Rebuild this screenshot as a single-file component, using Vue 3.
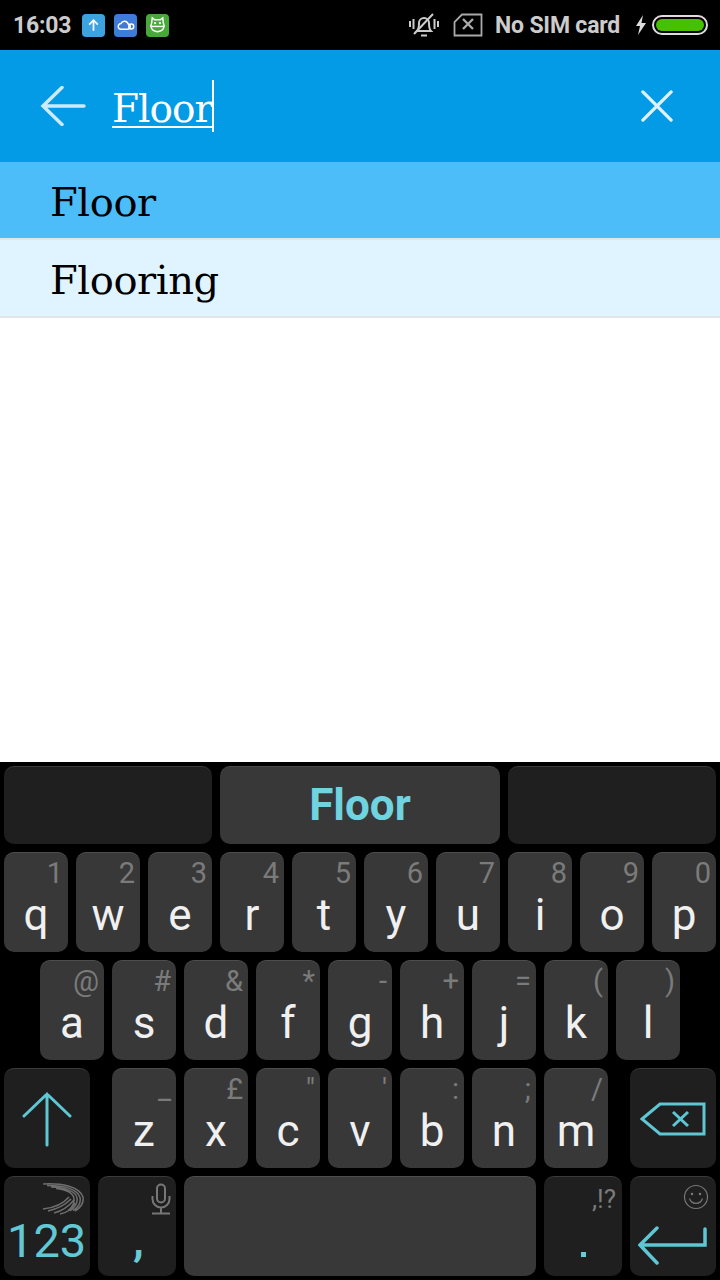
<template>
  <div class="phone">
    <div class="status">
      <span class="time">16:03</span>
      <span class="note blue">
        <svg width="24" height="24" viewBox="0 0 24 24" fill="none" stroke="#fff" stroke-width="1.8"><path d="M12 18V7M7.500 11.500 12 7l4.500 4.500"/></svg>
      </span>
      <span class="note cloud">
        <svg width="24" height="24" viewBox="0 0 24 24" fill="none" stroke="#fff" stroke-width="1.500"><path d="M7.500 16.500h7a2.800 2.800 0 0 0 .3-5.500A4 4 0 0 0 7.300 10.500 3 3 0 0 0 7.500 16.500z"/><circle cx="18" cy="13.500" r="2.600"/></svg>
      </span>
      <span class="note green">
        <svg width="24" height="24" viewBox="0 0 24 24" fill="none" stroke="#fff" stroke-width="1.500"><path d="M6.500 4.500 9 6.500h6l2.500-2 .5 5c2 4 .5 9-6 9.500-6.500-.5-8-5.500-6-9.500z"/><path d="M5.500 13.500h13"/><circle cx="9.500" cy="10" r=".5"/><circle cx="14.500" cy="10" r=".5"/></svg>
      </span>
      <span class="spacer"></span>
      <svg class="bell" width="32" height="26" viewBox="0 0 32 26" fill="none" stroke="#ccc" stroke-width="2">
        <path d="M9 19c2-2 2-5 2-8a5 5 0 0 1 10 0c0 3 0 6 2 8z"/>
        <path d="M13 23.500h6M6 22 25 2" />
        <path d="M2 9v6M5.500 7v10M26.500 7v10M30 9v6"/>
      </svg>
      <svg class="sim" width="30" height="24" viewBox="0 0 30 24" fill="none" stroke="#aaa" stroke-width="1.800">
        <path d="M9 1.500h19.500v21H1.500V9z"/>
        <path d="M10 6l10 10M20 6 10 16" stroke-width="2.400"/>
      </svg>
      <span class="carrier">No SIM card</span>
      <svg class="bolt" width="12" height="20" viewBox="0 0 12 20"><path d="M8 0 1 11h4l-2 9 8-12H6.500z" fill="#ddd"/></svg>
      <span class="battery"><span class="charge"></span></span>
    </div>

    <div class="search">
      <svg class="back" width="46" height="40" viewBox="0 0 46 40" fill="none" stroke="#cdeafa" stroke-width="3.500" stroke-linecap="round">
        <path d="M44 20H3M22 1.500 3 20l19 18.500"/>
      </svg>
      <span class="query">Floor</span>
      <span class="caret"></span>
      <span class="spacer"></span>
      <svg class="clear" width="34" height="34" viewBox="0 0 34 34" fill="none" stroke="#dff2fc" stroke-width="3.500" stroke-linecap="round">
        <path d="M2 2l30 30M32 2 2 32"/>
      </svg>
    </div>

    <div class="row-item active">Floor</div>
    <div class="row-item">Flooring</div>
    <div class="blank"></div>

    <div class="keyboard">
      <div class="candidates">
        <div class="cand side"></div>
        <div class="cand mid">Floor</div>
        <div class="cand side"></div>
      </div>

      <div class="keys">
        <div v-for="k in row1" :key="k[0]" class="key"><i class="hint">{{ k[1] }}</i><b>{{ k[0] }}</b></div>
      </div>
      <div class="keys second">
        <div v-for="k in row2" :key="k[0]" class="key"><i class="hint">{{ k[1] }}</i><b>{{ k[0] }}</b></div>
      </div>
      <div class="keys">
        <div class="key fn wide">
          <svg width="50" height="56" viewBox="0 0 50 56" fill="none" stroke="#5fc6d3" stroke-width="3" stroke-linecap="round">
            <path d="M25 54V3M2 25 25 3l23 22"/>
          </svg>
        </div>
        <div class="key-group">
          <div v-for="k in row3" :key="k[0]" class="key"><i class="hint">{{ k[1] }}</i><b>{{ k[0] }}</b></div>
        </div>
        <div class="key fn wide">
          <svg width="66" height="34" viewBox="0 0 66 34" fill="none" stroke="#5fc6d3" stroke-width="3">
            <path d="M2 17 20 2h44v30H20z"/>
            <path d="M33 10l15 14M48 10 33 24"/>
          </svg>
        </div>
      </div>
      <div class="keys">
        <div class="key fn wide">
          <svg class="swoosh" width="42" height="32" viewBox="0 0 42 32" fill="none" stroke="#6e6e6e" stroke-width="1.500">
            <path d="M1 1c18-1 36 2 40 13 1 6-3 11-8 14M5 2.500c15 0 30 3 33 12 1 5-2 10-7 13M9 4c12 .500 25 3.500 26 11 1 5-2 9-7 13M14 5.500c9 1 17 4 18 10 .5 4-1 8-6 12"/>
            <path d="M1 26c10-1 20-5 26-12M6 28c9-2 17-6 23-12M12 30c8-2 15-7 20-13M18 31c6-1 12-5 15-11"/>
          </svg>
          <span class="num">123</span>
        </div>
        <div class="key fn comma">
          <svg class="mic" width="20" height="32" viewBox="0 0 20 32" fill="none" stroke="#777" stroke-width="2">
            <rect x="6" y="1.500" width="8" height="18" rx="4"/>
            <path d="M1.500 13v3a8.500 8.500 0 0 0 17 0v-3M10 24.500V30M1 30.500h18"/>
          </svg>
          <span class="mark">,</span>
        </div>
        <div class="key space"></div>
        <div class="key fn comma">
          <i class="hint punct">,!?</i>
          <span class="dot"></span>
        </div>
        <div class="key fn wide">
          <svg class="smile" width="26" height="26" viewBox="0 0 26 26" fill="none" stroke="#777" stroke-width="1.200">
            <circle cx="13" cy="13" r="11.500"/>
            <path d="M6.500 14.500a6.800 6.800 0 0 0 13 0"/>
            <circle cx="9" cy="10" r=".7"/><circle cx="17" cy="10" r=".7"/>
          </svg>
          <svg class="enter" width="70" height="40" viewBox="0 0 70 40" fill="none" stroke="#5fc6d3" stroke-width="3.500" stroke-linecap="round">
            <path d="M67 3v16H4M19 2 2 19l17 18"/>
          </svg>
        </div>
      </div>
    </div>
  </div>
</template>

<script setup>
const row1 = [['q', '1'], ['w', '2'], ['e', '3'], ['r', '4'], ['t', '5'], ['y', '6'], ['u', '7'], ['i', '8'], ['o', '9'], ['p', '0']]
const row2 = [['a', '@'], ['s', '#'], ['d', '&'], ['f', '*'], ['g', '-'], ['h', '+'], ['j', '='], ['k', '('], ['l', ')']]
const row3 = [['z', '_'], ['x', '£'], ['c', '"'], ['v', "'"], ['b', ':'], ['n', ';'], ['m', '/']]
</script>

<style>
html, body { margin: 0; background: #fff; }
</style>

<style scoped>
.phone {
  width: 720px;
  height: 1280px;
  display: flex;
  flex-direction: column;
  overflow: hidden;
  font-family: Roboto, "Liberation Sans", sans-serif;
}
.spacer { flex: 1; }

.status {
  height: 50px;
  background: #000;
  display: flex;
  align-items: center;
  padding: 0 12px 0 13px;
  box-sizing: border-box;
  color: #ccc;
  flex-shrink: 0;
}
.time { font-size: 23px; font-weight: 700; margin-right: 11px; letter-spacing: -0.2px; }
.note {
  width: 23px;
  height: 23px;
  border-radius: 4px;
  margin-right: 9px;
  display: flex;
  align-items: center;
  justify-content: center;
}
.blue { background: #3ca2e0; }
.cloud { background: #3f7bd8; }
.green { background: #48a93a; }
.bell { margin-right: 13px; }
.sim { margin-right: 12px; }
.carrier { font-size: 23px; font-weight: 700; margin-right: 15px; letter-spacing: -0.2px; }
.bolt { margin-right: 5px; }
.battery {
  width: 56px;
  height: 20px;
  border: 2px solid #ddd;
  border-radius: 11px;
  box-sizing: border-box;
  padding: 2px;
  display: flex;
}
.charge { flex: 1; background: #45c100; border-radius: 7px; }

.search {
  height: 112px;
  background: #039ae6;
  display: flex;
  align-items: center;
  padding: 0 47px 0 40px;
  box-sizing: border-box;
  flex-shrink: 0;
}
.back { margin-right: 26px; }
.query {
  font-family: "DejaVu Serif", "Liberation Serif", serif;
  font-size: 39px;
  color: #fff;
  border-bottom: 2px solid #fff;
  line-height: 34px;
  letter-spacing: -1px;
  margin-top: 8px;
}
.caret { width: 2px; height: 52px; background: #fff; }
.clear { width: 32px; height: 32px; }

.row-item {
  height: 78px;
  line-height: 80px;
  padding-left: 50px;
  box-sizing: border-box;
  background: #e0f4ff;
  border-bottom: 2px solid #e2e5e8;
  font-family: "DejaVu Serif", "Liberation Serif", serif;
  font-size: 40px;
  letter-spacing: -0.4px;
  color: #000;
  flex-shrink: 0;
  overflow: hidden;
}
.row-item.active { background: #4cbdf9; }
.blank { flex: 1; background: #fff; }

.keyboard {
  height: 518px;
  background: #000;
  padding: 4px 4px 0;
  box-sizing: border-box;
  display: flex;
  flex-direction: column;
  gap: 8px;
  flex-shrink: 0;
}
.candidates { display: flex; gap: 8px; height: 78px; }
.cand {
  border-radius: 10px;
  border-top: 1px solid #3a3a3a;
  box-sizing: border-box;
}
.cand.side { width: 208px; background: #1f1f1f; }
.cand.mid {
  width: 280px;
  background: #383838;
  border-top-color: #484848;
  color: #6fd3e0;
  font-size: 44px;
  font-weight: 700;
  text-align: center;
  line-height: 76px;
}
.keys { display: flex; gap: 8px; height: 100px; }
.keys.second { padding-left: 36px; }
.key-group { display: flex; gap: 8px; margin: 0 14px 0 14px; }
.key {
  position: relative;
  width: 64px;
  height: 100px;
  box-sizing: border-box;
  background: #383838;
  border-top: 1px solid #4c4c4c;
  border-radius: 10px;
  display: flex;
  align-items: center;
  justify-content: center;
}
.key b {
  font-weight: 400;
  font-size: 44px;
  color: #f0f0f0;
  margin-top: 25px;
}
.hint {
  position: absolute;
  top: 2px;
  right: 5px;
  font-style: normal;
  font-size: 29px;
  color: #7b7b7b;
  line-height: 36px;
}
.fn { background: #1f1f1f; border-top-color: #3a3a3a; }
.wide { width: 86px; }
.comma { width: 78px; }
.space { width: 352px; }
.swoosh { position: absolute; top: 6px; right: 6px; }
.num {
  position: absolute;
  bottom: 11px;
  left: 3px;
  font-size: 47px;
  line-height: 48px;
  color: #62c8d5;
}
.mic { position: absolute; top: 6px; right: 5px; }
.mark {
  position: absolute;
  left: 35px;
  bottom: 17px;
  font-size: 44px;
  line-height: 38px;
  font-weight: 700;
  color: #67cbd8;
}
.punct { font-size: 26px; top: 4px; right: 6px; }
.dot {
  position: absolute;
  left: 37px;
  bottom: 19px;
  width: 5px;
  height: 5px;
  background: #67cbd8;
}
.smile { position: absolute; top: 7px; right: 7px; }
.enter { position: absolute; bottom: 10px; left: 8px; }
</style>
